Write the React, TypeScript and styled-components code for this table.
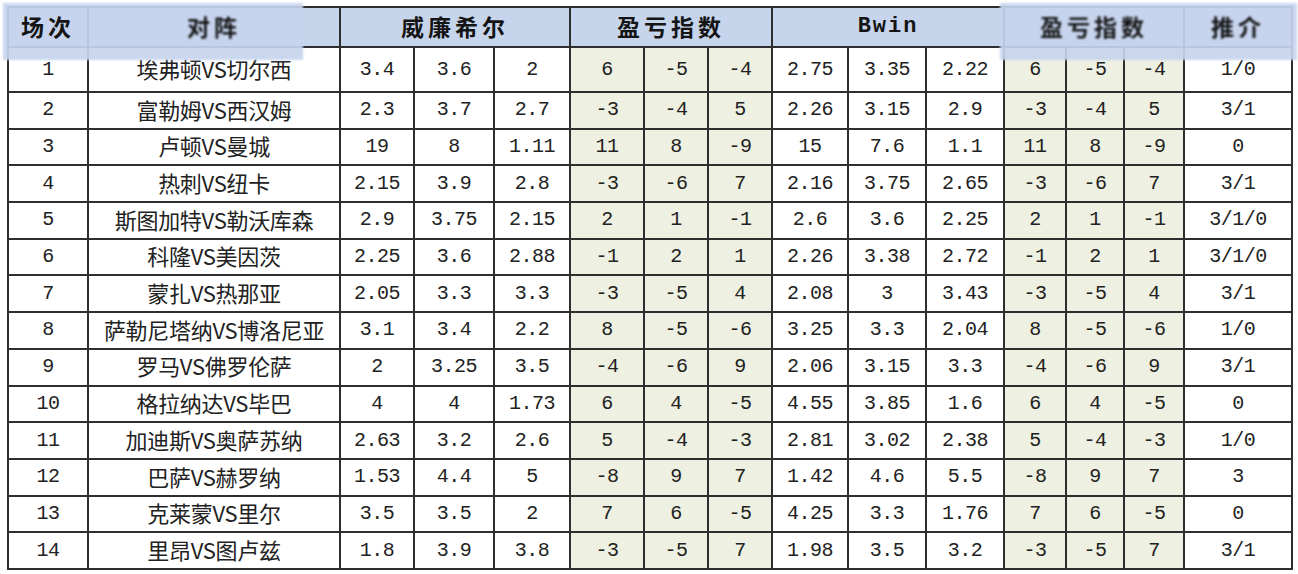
import React from "react";
import styled, { createGlobalStyle } from "styled-components";

const GlobalStyle = createGlobalStyle`
  body {
    margin: 0;
    background: #ffffff;
  }
`;

const Page = styled.div`
  padding: 6px 0 0 7px;
`;

const Wrap = styled.div`
  position: relative;
  width: 1284px;
`;

const Table = styled.table`
  width: 1284px;
  border-collapse: collapse;
  table-layout: fixed;
  color: #1f1f1f;
`;

const Col = styled.col<{ $w: number }>`
  width: ${(p) => p.$w}px;
`;

const HeadCell = styled.th`
  height: 38px;
  padding: 0;
  background: #c7d5ec;
  border: 2px solid #2e2e2e;
  text-align: center;
  vertical-align: middle;
  line-height: 1;
`;

const Label = styled.span<{ $latin?: boolean; $smudge?: boolean }>`
  position: relative;
  z-index: 2;
  display: inline-block;
  line-height: 1;
  font-family: ${(p) =>
    p.$latin
      ? '"Liberation Mono", monospace'
      : '"Noto Sans CJK SC", sans-serif'};
  font-size: ${(p) => (p.$latin ? "22px" : "23px")};
  font-weight: bold;
  letter-spacing: ${(p) => (p.$latin ? "2px" : "4px")};
  color: #151515;
  filter: ${(p) => (p.$smudge ? "blur(1px)" : "none")};
`;

const Row = styled.tr<{ $first?: boolean }>`
  height: ${(p) => (p.$first ? "45px" : "36.7px")};
`;

const Cell = styled.td<{ $tint?: boolean; $team?: boolean }>`
  padding: ${(p) => (p.$team ? "0 0 3px" : "0")};
  border: 2px solid #2e2e2e;
  background: ${(p) => (p.$tint ? "#eef0e1" : "#ffffff")};
  text-align: center;
  vertical-align: middle;
  white-space: nowrap;
  line-height: 1.2;
  font-family: ${(p) =>
    p.$team
      ? '"Noto Sans CJK SC", sans-serif'
      : '"Liberation Mono", monospace'};
  font-size: ${(p) => (p.$team ? "22px" : "20px")};
  letter-spacing: ${(p) => (p.$team ? "-0.3px" : "-0.5px")};
  color: #222222;
`;

const Patch = styled.div<{ $side: "left" | "right" }>`
  position: absolute;
  top: -3px;
  height: 57px;
  left: ${(p) => (p.$side === "left" ? "-4px" : "993px")};
  width: ${(p) => (p.$side === "left" ? "300px" : "297px")};
  background: rgba(198, 212, 237, 0.92);
  filter: blur(1px);
  z-index: 1;
`;

const widths = [80, 252, 74, 80, 76, 74, 64, 64, 76, 78, 78, 62, 58, 60, 108];
const tinted = [5, 6, 7, 11, 12, 13];

const rows: string[][] = [
  ["1", "埃弗顿VS切尔西", "3.4", "3.6", "2", "6", "-5", "-4", "2.75", "3.35", "2.22", "6", "-5", "-4", "1/0"],
  ["2", "富勒姆VS西汉姆", "2.3", "3.7", "2.7", "-3", "-4", "5", "2.26", "3.15", "2.9", "-3", "-4", "5", "3/1"],
  ["3", "卢顿VS曼城", "19", "8", "1.11", "11", "8", "-9", "15", "7.6", "1.1", "11", "8", "-9", "0"],
  ["4", "热刺VS纽卡", "2.15", "3.9", "2.8", "-3", "-6", "7", "2.16", "3.75", "2.65", "-3", "-6", "7", "3/1"],
  ["5", "斯图加特VS勒沃库森", "2.9", "3.75", "2.15", "2", "1", "-1", "2.6", "3.6", "2.25", "2", "1", "-1", "3/1/0"],
  ["6", "科隆VS美因茨", "2.25", "3.6", "2.88", "-1", "2", "1", "2.26", "3.38", "2.72", "-1", "2", "1", "3/1/0"],
  ["7", "蒙扎VS热那亚", "2.05", "3.3", "3.3", "-3", "-5", "4", "2.08", "3", "3.43", "-3", "-5", "4", "3/1"],
  ["8", "萨勒尼塔纳VS博洛尼亚", "3.1", "3.4", "2.2", "8", "-5", "-6", "3.25", "3.3", "2.04", "8", "-5", "-6", "1/0"],
  ["9", "罗马VS佛罗伦萨", "2", "3.25", "3.5", "-4", "-6", "9", "2.06", "3.15", "3.3", "-4", "-6", "9", "3/1"],
  ["10", "格拉纳达VS毕巴", "4", "4", "1.73", "6", "4", "-5", "4.55", "3.85", "1.6", "6", "4", "-5", "0"],
  ["11", "加迪斯VS奥萨苏纳", "2.63", "3.2", "2.6", "5", "-4", "-3", "2.81", "3.02", "2.38", "5", "-4", "-3", "1/0"],
  ["12", "巴萨VS赫罗纳", "1.53", "4.4", "5", "-8", "9", "7", "1.42", "4.6", "5.5", "-8", "9", "7", "3"],
  ["13", "克莱蒙VS里尔", "3.5", "3.5", "2", "7", "6", "-5", "4.25", "3.3", "1.76", "7", "6", "-5", "0"],
  ["14", "里昂VS图卢兹", "1.8", "3.9", "3.8", "-3", "-5", "7", "1.98", "3.5", "3.2", "-3", "-5", "7", "3/1"],
];

const App: React.FC = () => {
  return (
    <Page>
      <GlobalStyle />
      <Wrap>
        <Table>
          <colgroup>
            {widths.map((w, i) => (
              <Col key={i} $w={w} />
            ))}
          </colgroup>
          <thead>
            <tr>
              <HeadCell>
                <Label>场次</Label>
              </HeadCell>
              <HeadCell>
                <Label $smudge>对阵</Label>
              </HeadCell>
              <HeadCell colSpan={3}>
                <Label>威廉希尔</Label>
              </HeadCell>
              <HeadCell colSpan={3}>
                <Label>盈亏指数</Label>
              </HeadCell>
              <HeadCell colSpan={3}>
                <Label $latin>Bwin</Label>
              </HeadCell>
              <HeadCell colSpan={3}>
                <Label $smudge>盈亏指数</Label>
              </HeadCell>
              <HeadCell>
                <Label $smudge>推介</Label>
              </HeadCell>
            </tr>
          </thead>
          <tbody>
            {rows.map((r, ri) => (
              <Row key={ri} $first={ri === 0}>
                {r.map((v, ci) => (
                  <Cell key={ci} $team={ci === 1} $tint={tinted.includes(ci)}>
                    {v}
                  </Cell>
                ))}
              </Row>
            ))}
          </tbody>
        </Table>
        <Patch $side="left" />
        <Patch $side="right" />
      </Wrap>
    </Page>
  );
};

export default App;
